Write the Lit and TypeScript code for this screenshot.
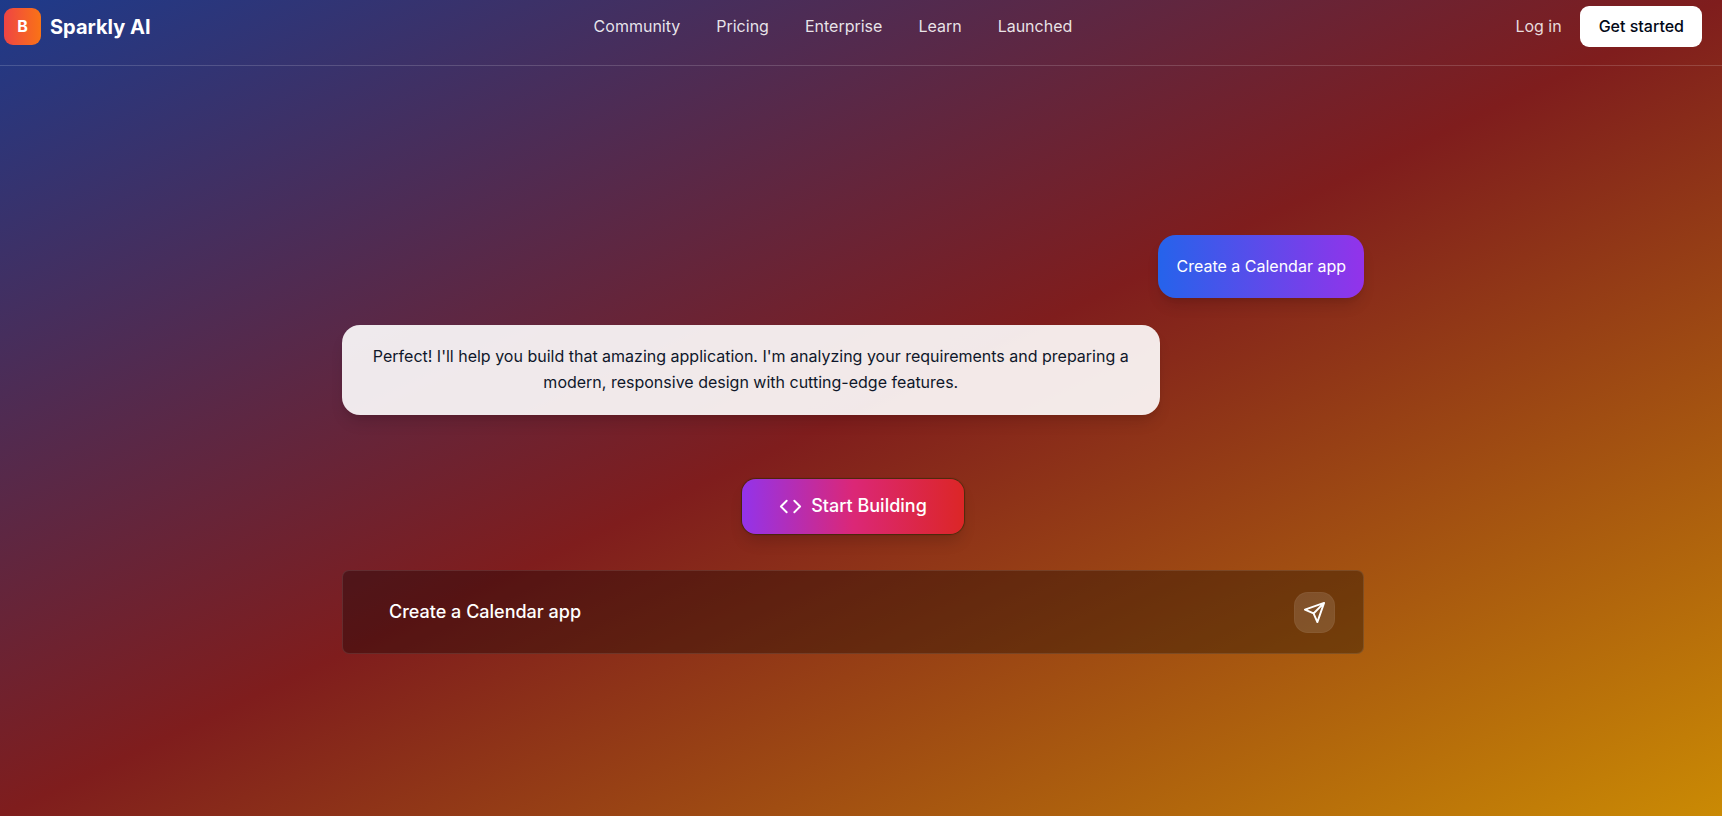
import { LitElement, html, css } from "lit";
import { customElement, state } from "lit/decorators.js";

const LINKS = ["Community", "Pricing", "Enterprise", "Learn", "Launched"];

@customElement("app-root")
export class AppRoot extends LitElement {
  @state() private prompt = "Create a Calendar app";

  static styles = css`
    :host {
      display: block;
      font-family: Inter, "Liberation Sans", sans-serif;
      font-size: 16px;
      line-height: 26px;
      color: #fff;
    }
    * {
      box-sizing: border-box;
    }
    button,
    input {
      font: inherit;
      color: inherit;
      border: 0;
      margin: 0;
    }
    button {
      cursor: pointer;
    }
    a {
      color: inherit;
      text-decoration: none;
    }
    .page {
      display: flex;
      flex-direction: column;
      min-height: 100vh;
      background: linear-gradient(to bottom right, #1e3a8a, #7f1d1d, #ca8a04);
    }
    .header {
      display: flex;
      justify-content: space-between;
      align-items: flex-start;
      padding: 6px 20px 18px 4px;
      border-bottom: 1px solid rgba(255, 255, 255, 0.16);
    }
    .brand,
    .account {
      display: flex;
      align-items: center;
      height: 41px;
    }
    .brand {
      gap: 9px;
      font-size: 20px;
      font-weight: 700;
    }
    .logo {
      display: grid;
      place-items: center;
      width: 37px;
      height: 37px;
      padding-bottom: 2px;
      border-radius: 9px;
      background: linear-gradient(to right, #ef4444, #f97316);
      font-size: 16px;
      font-weight: 700;
    }
    .nav {
      display: flex;
      align-items: center;
      gap: 36px;
      height: 39px;
      color: rgba(255, 255, 255, 0.88);
    }
    .account {
      gap: 18px;
    }
    .login {
      padding: 0 0 2px;
      background: none;
      color: rgba(255, 255, 255, 0.85);
    }
    .started {
      height: 41px;
      padding: 0 18px 2px 19px;
      border-radius: 9px;
      background: #fff;
      color: #020817;
      font-weight: 500;
    }
    .main {
      flex: 1;
      display: flex;
      flex-direction: column;
      justify-content: center;
      align-items: center;
      padding: 24px 16px 18px 0;
    }
    .chat {
      display: flex;
      flex-direction: column;
      width: 100%;
      max-width: 1022px;
    }
    .bubble {
      max-width: 80%;
      margin: 0 0 27px;
      padding: 18px 18px 19px;
      border-radius: 18px;
      text-align: center;
      box-shadow: 0 10px 15px -3px rgba(0, 0, 0, 0.12),
        0 4px 6px -4px rgba(0, 0, 0, 0.12);
    }
    .mine {
      align-self: flex-end;
      background: linear-gradient(to right, #2563eb, #9333ea);
    }
    .reply {
      align-self: flex-start;
      padding: 18px 28px 20px;
      background: rgba(255, 255, 255, 0.9);
      color: #0f172a;
    }
    .build {
      display: flex;
      align-self: center;
      align-items: center;
      gap: 9px;
      height: 55px;
      margin: 37px 0 36px;
      padding: 0 37px;
      border-radius: 14px;
      background: linear-gradient(to right, #9333ea, #db2777, #dc2626);
      box-shadow: 0 0 1px 1px rgba(20, 40, 0, 0.5),
        0 10px 15px -3px rgba(0, 0, 0, 0.15);
      font-size: 18px;
      font-weight: 500;
    }
    .composer {
      display: flex;
      align-items: center;
      height: 84px;
      padding: 1px 28px 0 46px;
      border: 1px solid rgba(255, 255, 255, 0.1);
      border-radius: 7px;
      background: rgba(0, 0, 0, 0.32);
    }
    .prompt {
      flex: 1;
      min-width: 0;
      padding: 0;
      background: none;
      outline: none;
      font-size: 18px;
      font-weight: 500;
    }
    .send {
      display: grid;
      place-items: center;
      width: 41px;
      height: 41px;
      padding: 0;
      border: 1px solid rgba(255, 255, 255, 0.04);
      border-radius: 14px;
      background: rgba(255, 255, 255, 0.13);
    }
    svg {
      display: block;
      fill: none;
      stroke: currentColor;
      stroke-width: 2;
      stroke-linecap: round;
      stroke-linejoin: round;
    }
  `;

  render() {
    return html`
      <div class="page">
        <header class="header">
          <a class="brand" href="#"><span class="logo">B</span>Sparkly AI</a>
          <nav class="nav">${LINKS.map((l) => html`<a href="#">${l}</a>`)}</nav>
          <div class="account">
            <button class="login">Log in</button>
            <button class="started">Get started</button>
          </div>
        </header>
        <main class="main">
          <div class="chat">
            <p class="bubble mine">Create a Calendar app</p>
            <p class="bubble reply">
              Perfect! I'll help you build that amazing application. I'm
              analyzing your requirements and preparing a modern, responsive
              design with cutting-edge features.
            </p>
            <button class="build">
              <svg width="23" height="23" viewBox="0 0 24 24" aria-hidden="true">
                <path d="m16 18 6-6-6-6M8 6l-6 6 6 6" />
              </svg>
              Start Building
            </button>
            <form class="composer" @submit=${(e: Event) => e.preventDefault()}>
              <input
                class="prompt"
                type="text"
                aria-label="Prompt"
                .value=${this.prompt}
                @input=${(e: Event) =>
                  (this.prompt = (e.target as HTMLInputElement).value)}
              />
              <button class="send" aria-label="Send">
                <svg width="23" height="23" viewBox="0 0 24 24" aria-hidden="true">
                  <path d="M22 2 2 9l9 4 4 9zM22 2 11 13" />
                </svg>
              </button>
            </form>
          </div>
        </main>
      </div>
    `;
  }
}
